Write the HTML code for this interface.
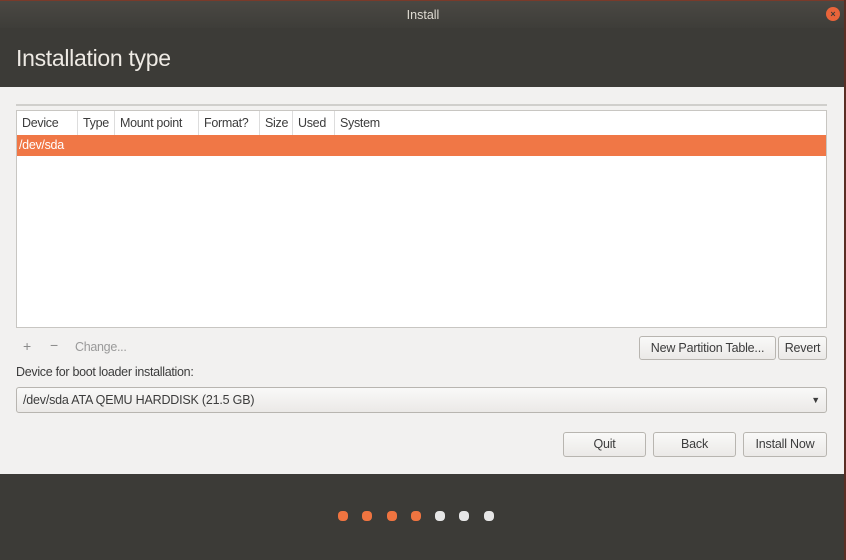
<!DOCTYPE html>
<html><head><meta charset="utf-8"><style>
*{margin:0;padding:0;box-sizing:border-box}
body{width:846px;height:560px;overflow:hidden;background:#3c3b37;font-family:"Liberation Sans",sans-serif;position:relative;font-size:12.5px;color:#3c3c3c}
.abs{position:absolute}
#tb{left:0;top:0;width:846px;height:28px;background:linear-gradient(#4a4843,#3e3d39);color:#dfdbd2;font-size:12.5px;text-align:center;line-height:28px;border-top:1px solid #7a3a2a}
#close{left:826px;top:7px;width:14px;height:14px;border-radius:50%;background:#e9643a;color:#3c3b37;font-size:9px;line-height:14px;text-align:center;font-weight:bold}
#hd{left:0;top:28px;width:846px;height:59px;background:#3c3b37}
#hd span{position:absolute;left:16px;top:17px;color:#eeeae4;font-size:23px;letter-spacing:-0.3px}
#ct{left:0;top:87px;width:846px;height:387px;background:#f2f1f0}
#edge{left:844px;top:0;width:2px;height:560px;background:#5a2e24}
#sep{left:16px;top:104px;width:811px;height:2px;background:#d0cfcc}
#tbl{left:16px;top:110px;width:811px;height:218px;background:#fff;border:1px solid #c8c6c2}
.th{position:absolute;top:0;height:24px;line-height:24px;padding-left:5px;border-right:1px solid #ddd;font-size:12.5px;letter-spacing:-0.3px;white-space:nowrap}
#sel{left:0;top:24px;width:809px;height:21px;background:#f07746;color:#fff;line-height:21px;padding-left:2px;letter-spacing:-0.3px}
.btn{position:absolute;border:1px solid #b8b5b0;border-radius:3px;background:linear-gradient(#f9f9f8,#ebe9e7);text-align:center;font-size:12.5px;letter-spacing:-0.2px;color:#3c3c3c}
.dot{position:absolute;top:511px;width:10px;height:10px;border-radius:4px}
</style></head><body>
<div id="tb" class="abs">Install</div>
<div id="close" class="abs">×</div>
<div id="hd" class="abs"><span>Installation type</span></div>
<div id="ct" class="abs"></div>
<div id="sep" class="abs"></div>
<div id="tbl" class="abs">
<div class="th" style="left:0;width:61px">Device</div>
<div class="th" style="left:61px;width:37px">Type</div>
<div class="th" style="left:98px;width:84px">Mount point</div>
<div class="th" style="left:182px;width:61px">Format?</div>
<div class="th" style="left:243px;width:33px">Size</div>
<div class="th" style="left:276px;width:42px">Used</div>
<div class="th" style="left:318px;border:none">System</div>
<div id="sel" class="abs">/dev/sda</div>
</div>
<div class="abs" style="left:23px;top:338px;color:#8a8a8a;font-size:14px">+</div>
<div class="abs" style="left:50px;top:337px;color:#8a8a8a;font-size:14px">−</div>
<div class="abs" style="left:75px;top:340px;color:#9a9a9a;letter-spacing:-0.3px">Change...</div>
<div class="btn" style="left:639px;top:336px;width:137px;height:24px;line-height:22px">New Partition Table...</div>
<div class="btn" style="left:778px;top:336px;width:49px;height:24px;line-height:22px">Revert</div>
<div class="abs" style="left:16px;top:365px;letter-spacing:-0.3px">Device for boot loader installation:</div>
<div class="btn" style="left:16px;top:387px;width:811px;height:26px;line-height:24px;text-align:left;padding-left:6px">/dev/sda ATA QEMU HARDDISK (21.5 GB)<span style="position:absolute;right:6px;top:0;font-size:9px">▼</span></div>
<div class="btn" style="left:563px;top:432px;width:83px;height:25px;line-height:23px">Quit</div>
<div class="btn" style="left:653px;top:432px;width:83px;height:25px;line-height:23px">Back</div>
<div class="btn" style="left:743px;top:432px;width:84px;height:25px;line-height:23px">Install Now</div>
<div class="dot" style="left:338px;background:#ef7440"></div>
<div class="dot" style="left:362px;background:#ef7440"></div>
<div class="dot" style="left:387px;background:#ef7440"></div>
<div class="dot" style="left:411px;background:#ef7440"></div>
<div class="dot" style="left:435px;background:#e6e6e6"></div>
<div class="dot" style="left:459px;background:#e6e6e6"></div>
<div class="dot" style="left:484px;background:#e6e6e6"></div>
<div id="edge" class="abs"></div>
</body></html>
